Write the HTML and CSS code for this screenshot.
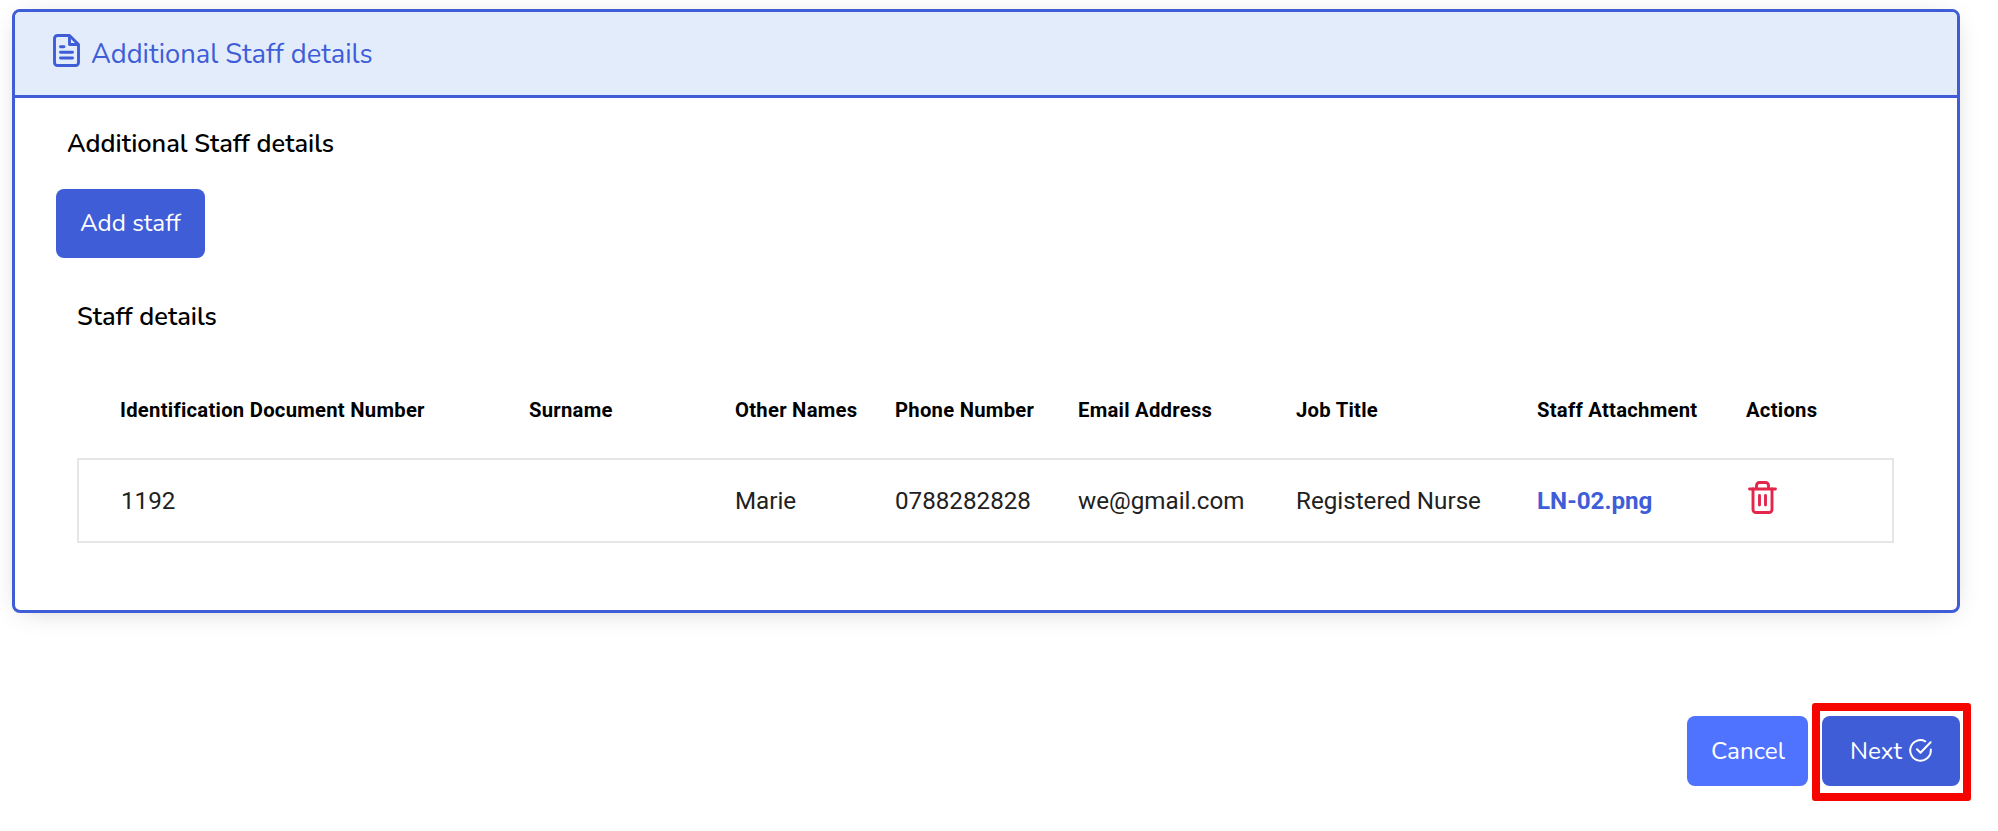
FILE: index.html
```html
<!DOCTYPE html>
<html lang="en">
<head>
    <meta charset="UTF-8">
    <meta name="viewport" content="width=device-width, initial-scale=1.0">
    <title>Additional Staff details</title>
    <link rel="stylesheet" href="styles.css">
</head>
<body>
    <div class="card">
        <div class="card-header">
            <svg class="icon-file" width="27" height="33" viewBox="0 0 27 33" fill="none" stroke="currentColor" stroke-width="2.9" stroke-linejoin="round">
                <path d="M16.500 1.500H4.500a3 3 0 0 0-3 3v24a3 3 0 0 0 3 3h18a3 3 0 0 0 3-3V10.500z"/>
                <path d="M16.500 1.500v9h9"/>
                <path d="M7.500 12.700h3.500M7.500 18.300h12M7.500 24h12" stroke-linecap="round"/>
            </svg>
            <span class="card-title">Additional Staff details</span>
        </div>

        <div class="card-body">
            <h2 class="section-title">Additional Staff details</h2>
            <button class="btn btn-add">Add staff</button>

            <div class="staff">
                <h3 class="staff-title">Staff details</h3>
                <table class="staff-table">
                    <colgroup>
                        <col class="col-id">
                        <col class="col-surname">
                        <col class="col-names">
                        <col class="col-phone">
                        <col class="col-email">
                        <col class="col-job">
                        <col class="col-file">
                        <col>
                    </colgroup>
                    <thead>
                        <tr>
                            <th>Identification Document Number</th>
                            <th>Surname</th>
                            <th>Other Names</th>
                            <th>Phone Number</th>
                            <th>Email Address</th>
                            <th>Job Title</th>
                            <th>Staff Attachment</th>
                            <th>Actions</th>
                        </tr>
                    </thead>
                    <tbody>
                        <tr>
                            <td>1192</td>
                            <td></td>
                            <td>Marie</td>
                            <td>0788282828</td>
                            <td>we@gmail.com</td>
                            <td>Registered Nurse</td>
                            <td><a href="#" class="file-link">LN-02.png</a></td>
                            <td>
                                <svg class="icon-trash" width="29" height="33" viewBox="0 0 29 33" fill="none" stroke="currentColor" stroke-width="2.9" stroke-linecap="round" stroke-linejoin="round">
                                    <path d="M1.500 8h26M8.500 8V4.500a3 3 0 0 1 3-3h6a3 3 0 0 1 3 3V8"/>
                                    <path d="M5 8v20.500a3 3 0 0 0 3 3h13a3 3 0 0 0 3-3V8M11.500 14.500v9.500M17.500 14.500v9.500"/>
                                </svg>
                            </td>
                        </tr>
                    </tbody>
                </table>
            </div>
        </div>
    </div>

    <div class="actions">
        <button class="btn btn-cancel">Cancel</button>
        <div class="highlight">
            <button class="btn btn-next">
                Next
                <svg width="23" height="23" viewBox="0 0 23 23" fill="none" stroke="currentColor" stroke-width="2" stroke-linecap="round" stroke-linejoin="round">
                    <path d="M21.800 10.500v1a10.300 10.300 0 1 1-5.600-9.200"/>
                    <path d="M8 10.200l3.500 3.500L21.600 3.300"/>
                </svg>
            </button>
        </div>
    </div>
</body>
</html>
```

FILE: styles.css
```css
* {
    box-sizing: border-box;
}

body {
    font-family: Nunito, Lato, sans-serif;
    background-color: #fff;
    color: #000;
    margin: 0;
    padding: 9px 27px 0 12px;
}

.card {
    width: 1948px;
    height: 604px;
    border: 3px solid #405dd8;
    border-radius: 8px;
    background-color: #fff;
    box-shadow: 0 4px 26px -10px rgba(0, 0, 0, 0.25);
}

.card-header {
    display: flex;
    height: 86px;
    padding: 22px 0 0 38px;
    border-bottom: 3px solid #405dd8;
    border-radius: 5px 5px 0 0;
    background-color: #e3ecfb;
    color: #405dd8;
}

.card-title {
    margin: 2px 0 0 11px;
    font-size: 27.3px;
    line-height: 36px;
}

.card-body {
    padding: 28px 62px 0 41px;
}

.section-title {
    margin: 0 0 27px 11px;
    font-size: 25.35px;
    font-weight: 600;
    line-height: 36px;
}

.btn {
    display: flex;
    align-items: center;
    justify-content: center;
    height: 69px;
    padding: 0 0 1px;
    border: none;
    border-radius: 8px;
    background-color: #405dd8;
    color: #fff;
    font-family: inherit;
    font-size: 24.3px;
    cursor: pointer;
}

.btn-add {
    width: 149px;
}

.staff {
    padding: 41px 0 0 21px;
}

.staff-title {
    margin: 0;
    font-size: 25.35px;
    font-weight: 600;
    line-height: 36px;
}

.staff-table {
    width: 1817px;
    margin-top: 26px;
    border-collapse: collapse;
    table-layout: fixed;
    font-family: Roboto, sans-serif;
}

.col-id { width: 451px; }
.col-surname { width: 206px; }
.col-names { width: 160px; }
.col-phone { width: 183px; }
.col-email { width: 218px; }
.col-job { width: 241px; }
.col-file { width: 209px; }

.staff-table th,
.staff-table td {
    padding: 0;
    text-align: left;
    white-space: nowrap;
}

.staff-table th:first-child,
.staff-table td:first-child {
    padding-left: 42px;
}

.staff-table th {
    height: 98px;
    font-size: 20.25px;
    letter-spacing: 0.26px;
}

.staff-table tbody tr {
    height: 83px;
    border: 2px solid #e6e6e6;
}

.staff-table td {
    color: #212121;
    font-size: 24.2px;
}

.file-link {
    color: #405dd8;
    font-weight: 700;
    text-decoration: none;
}

.icon-trash {
    display: block;
    margin: 0 0 7px 2px;
    color: #e5264b;
}

.actions {
    display: flex;
    justify-content: flex-end;
    gap: 4px;
    margin: 90px 0 0;
}

.btn-cancel {
    width: 121px;
    height: 70px;
    margin-top: 13px;
    padding-left: 1px;
    background-color: #5073ff;
}

/* red marker around the next step */
.highlight {
    padding: 5px 3px 7px 2px;
    border: 8px solid #f50400;
    border-radius: 3px;
}

.btn-next {
    gap: 7px;
    width: 138px;
    height: 70px;
}
```
